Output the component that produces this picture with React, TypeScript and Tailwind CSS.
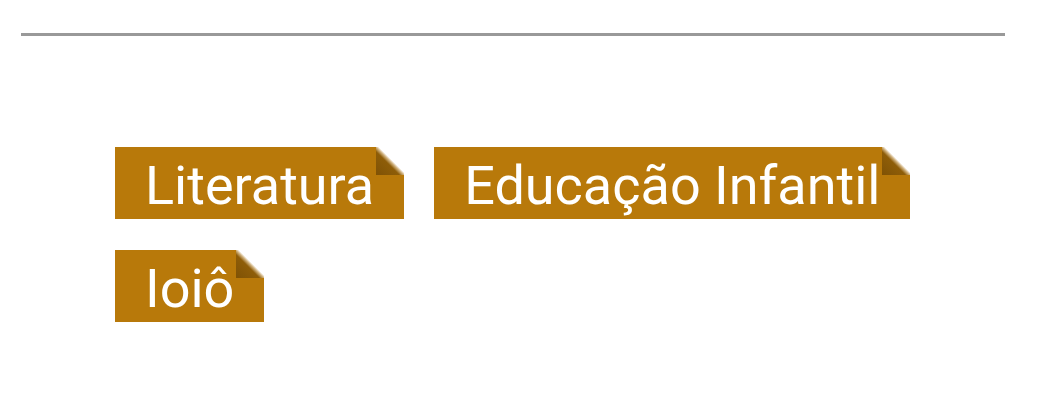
const tags = ['Literatura', 'Educação Infantil', 'Ioiô']

function Tag({ label }: { label: string }) {
  return (
    <span className="relative inline-block h-[72px] bg-[#b8790a] px-[30px] pt-[6px] text-[54px] leading-[66px] text-white">
      {label}
      <span className="absolute right-0 top-0 h-[28px] w-[28px] bg-[linear-gradient(to_bottom_left,#ffffff_45%,#d2b584_50%,#8e5d08_58%,#7f5205_100%)]" />
    </span>
  )
}

export default function App() {
  return (
    <div className="min-h-[402px] bg-white font-['Roboto','Liberation_Sans',sans-serif]">
      <div className="px-[21px] pt-[33px]">
        <div className="h-[3px] w-[984px] bg-[#999999]" />
      </div>
      <div className="flex w-[1000px] flex-wrap gap-x-[30px] gap-y-[31px] pl-[115px] pt-[111px]">
        {tags.map(t => (
          <Tag key={t} label={t} />
        ))}
      </div>
    </div>
  )
}
